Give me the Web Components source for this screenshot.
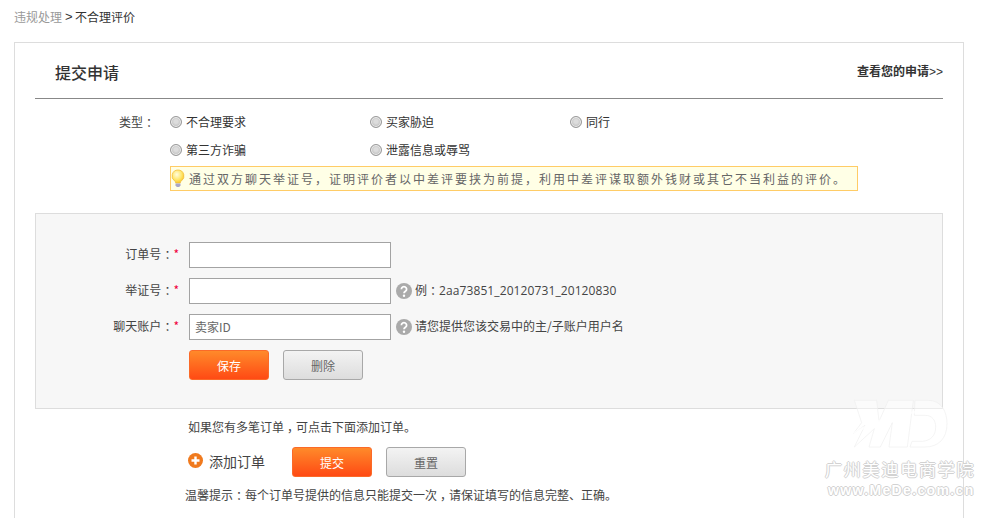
<!DOCTYPE html>
<html lang="zh"><head><meta charset="utf-8"><title>提交申请</title>
<style>
html,body{margin:0;padding:0;height:518px;overflow:hidden;background:#fff}
body{font:12px/18px "Noto Sans CJK SC","Liberation Sans",sans-serif;color:#444}
</style></head><body>
<app-page></app-page>
<template id="t-page"><style>
:host{display:block;position:relative;width:987px;height:518px;overflow:hidden}
.p{font-feature-settings:"halt";padding:0 3px}
.crumb{height:42px;padding:8px 0 0 14px;box-sizing:border-box;line-height:18px;display:flex;color:#333}
.crumb a{color:#999}.crumb span{margin:0 3px 0 3px;font:13px/18px "Liberation Sans",sans-serif;width:7px;overflow:visible}
.card{margin-left:14px;width:950px;height:600px;box-sizing:border-box;border:1px solid #ddd;padding:0 20px}
.head{height:56px;box-sizing:border-box;border-bottom:1px solid #888;display:flex;justify-content:space-between;align-items:center;padding:2px 0 0 20px}
h1{margin:0;font-size:16px;font-weight:500;color:#333}
.head a{font-weight:700;font-size:12px;color:#333;margin-top:-2px;white-space:nowrap}
.head a span{font:12px "Liberation Sans",sans-serif}
.types{display:grid;grid-template-columns:135px 200px 200px 200px;grid-auto-rows:28px;padding-top:13px;height:114px;box-sizing:border-box}
.types label{text-align:right;padding-right:15px;line-height:20px;color:#444}
.hint{grid-column:2/5;margin-top:-2px;width:688px;height:25px;box-sizing:border-box;border:1px solid #fc6;background:#ffffe6;display:flex;align-items:center;letter-spacing:2px;color:#666;white-space:nowrap}
.hint svg{margin-right:4px;flex:none}
.panel{height:196px;box-sizing:border-box;border:1px solid #ddd;background:#f7f7f7;padding:28px 0 0 153px;display:flex;flex-direction:column;gap:10px}
.btns{display:flex;gap:14px}
.below{padding:9px 0 0 153px}.below p{margin:0;color:#444}
.add{display:flex;align-items:center;margin-top:11px;height:30px}
.add b{font-weight:400;font-size:14px;margin-left:6px;width:83px;margin-top:-3px;flex:none}
.add svg{margin-top:-4px;flex:none}
.below p.tip{margin:9px 0 0 -3px;white-space:nowrap}
</style>
<nav class="crumb"><a>违规处理</a><span>&gt;</span>不合理评价</nav>
<section class="card">
<header class="head"><h1>提交申请</h1><a>查看您的申请<span>&gt;&gt;</span></a></header>
<div class="types"><label>类型<span class="p">：</span></label><x-radio>不合理要求</x-radio><x-radio>买家胁迫</x-radio><x-radio>同行</x-radio><i></i><x-radio>第三方诈骗</x-radio><x-radio>泄露信息或辱骂</x-radio><i></i><i></i>
<div class="hint"><svg width="14" height="20" viewBox="0 0 14 20"><defs><radialGradient id="g" cx=".4" cy=".35" r=".7"><stop offset="0" stop-color="#fffde0"/><stop offset=".6" stop-color="#ffe566"/><stop offset="1" stop-color="#f8c020"/></radialGradient></defs><path d="M7 1a6 6 0 0 0-3.300 11c.7.5 1 1 1 2h4.600c0-1 .3-1.500 1-2A6 6 0 0 0 7 1z" fill="url(#g)" stroke="#f2c040" stroke-width=".8"/><path d="M4.500 14.500h5v2l-1.300 1.500H5.800l-1.300-1.500z" fill="#a9a6c8"/></svg>通过双方聊天举证号，证明评价者以中差评要挟为前提，利用中差评谋取额外钱财或其它不当利益的评价。</div></div>
<div class="panel">
<x-field label="订单号"></x-field>
<x-field label="举证号" help="例：|2aa73851_20120731_20120830"></x-field>
<x-field label="聊天账户" value="卖家ID" help="请您提供您该交易中的主/子账户用户名"></x-field>
<div class="btns"><x-btn primary>保存</x-btn><x-btn>删除</x-btn></div>
</div>
<div class="below"><p>如果您有多笔订单<span class="p">，</span>可点击下面添加订单。</p>
<div class="add"><svg width="15" height="15" viewBox="0 0 15 15"><circle cx="7.500" cy="7.500" r="7.500" fill="#f07a1e"/><path d="M7.500 3.500v8M3.500 7.500h8" stroke="#fff" stroke-width="2.400"/></svg><b>添加订单</b><div class="btns"><x-btn primary>提交</x-btn><x-btn>重置</x-btn></div></div>
<p class="tip">温馨提示<span class="p">：</span>每个订单号提供的信息只能提交一次<span class="p">，</span>请保证填写的信息完整、正确。</p></div>
</section>
<x-watermark></x-watermark>
</template>
<template id="t-radio"><style>
:host{display:flex;align-items:flex-start;color:#333}
i{width:12px;height:12px;box-sizing:border-box;border-radius:50%;border:1px solid #999;background:radial-gradient(circle at 50% 45%,#dcdcdc 0 25%,#b8b8b8 80%);margin:4px 4px 0 0;box-shadow:inset 0 0 0 1px #eee;flex:none}
span{line-height:18px;padding-top:1px}
</style><i></i><span><slot></slot></span></template>
<template id="t-field"><style>
:host{display:flex;align-items:center;height:26px}
.p{font-feature-settings:"halt";padding:0 3px}
.l{width:143px;margin-left:-153px;text-align:right;padding-right:10px;flex:none;white-space:nowrap;color:#444;margin-top:-2px}
.l em{color:#f0003c;font-style:normal}
.box{width:202px;height:26px;box-sizing:border-box;border:1px solid #a3a3a3;background:#fff;padding:0 5px;line-height:24px;color:#666;flex:none}
.h{display:flex;align-items:center;margin-left:5px;color:#444;white-space:nowrap}
.h svg{margin-right:3px;flex:none}
.h span.t{margin-top:-2px}
.n{font-family:"Open Sans","Liberation Sans",sans-serif;letter-spacing:.1px}
</style><div class="l"></div><div class="box"></div><div class="h"><svg width="16" height="16" viewBox="0 0 16 16"><circle cx="8" cy="8" r="8" fill="#aaa"/><path d="M5.400 6.200a2.600 2.500 0 1 1 4 2.100c-.9.600-1.400 1-1.400 2" fill="none" stroke="#fff" stroke-width="1.800"/><circle cx="8" cy="12.700" r="1.200" fill="#fff"/></svg><span class="t"></span></div></template>
<template id="t-btn"><style>
:host{display:block;width:80px;height:30px;box-sizing:border-box;border-radius:3px;text-align:center;line-height:30px;font-size:12px;border:1px solid #a8a8a8;color:#666;background:linear-gradient(#f3f3f3,#ddd)}
:host([primary]){border-color:#fb6a28;color:#fff;background:linear-gradient(#ff8a2a,#ff4a14)}
</style><slot></slot></template>
<template id="t-wm"><style>
:host{position:absolute;left:825px;top:392px;width:156px;height:110px;pointer-events:none}
svg{position:absolute;left:20px;top:0}
.a,.b{position:absolute;left:0;white-space:nowrap;color:#fff;text-shadow:-1px 0 #d2d2d2,1px 0 #d2d2d2,0 -1px #d2d2d2,0 1px #d2d2d2}
.a{top:66px;font-size:17px;letter-spacing:1.800px;line-height:22px;font-family:"Noto Sans CJK SC",sans-serif}
.b{top:89px;left:3px;font:bold 14px/18px "Liberation Sans",sans-serif;letter-spacing:1.350px}
</style><svg width="110" height="66" viewBox="0 0 330 198"><path d="M28 25H95L102 88 130 25H205L187 165H132L142 92 106 165H72L88 110 28 165 60 100 25 125 50 92z" fill="#fff" fill-opacity=".45" stroke="#eee" stroke-width="2"/><path fill-rule="evenodd" d="M210 25H250C290 25 306 60 306 95 306 140 280 165 240 165H195L201 148H232C258 146 272 130 272 105 272 85 262 70 240 70H208z" fill="#fff" fill-opacity=".45" stroke="#eee" stroke-width="2"/><path d="M25 125C90 85 150 68 212 60" fill="none" stroke="#fff" stroke-opacity=".7" stroke-width="8"/></svg><div class="a">广州美迪电商学院</div><div class="b">www.MeDe.com.cn</div></template>
<script>
function mk(name,tid,init){customElements.define(name,class extends HTMLElement{constructor(){super();this.attachShadow({mode:'open'}).appendChild(document.getElementById(tid).content.cloneNode(true))}connectedCallback(){init&&init(this)}})}
mk('x-radio','t-radio');mk('x-btn','t-btn');mk('x-watermark','t-wm');
mk('x-field','t-field',e=>{const r=e.shadowRoot;r.querySelector('.l').innerHTML=e.getAttribute('label')+'<span class="p">：</span><em>*</em>';r.querySelector('.box').textContent=e.getAttribute('value')||'';const h=e.getAttribute('help'),d=r.querySelector('.h');if(h){const [a,b]=h.split('|');d.querySelector('.t').innerHTML=b?'例<span class="p">：</span><span class="n">'+b+'</span>':a}else d.style.display='none'});
mk('app-page','t-page');
</script></body></html>
